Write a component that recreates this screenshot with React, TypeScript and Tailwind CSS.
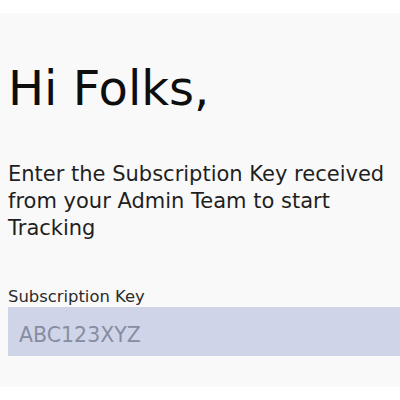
import React from 'react'

const App = () => {
  return (
    <div className="min-h-screen bg-white pt-[13px]" style={{fontFamily: '"DejaVu Sans", sans-serif'}}>
      <div className="h-[374px] bg-[#f9f9f9] pl-2 pt-[51px]">
        <h1 className="text-[48px] leading-[48px] text-[#0e0e0e]">Hi Folks,</h1>
        <p className="mt-[49px] pr-2 text-[21px] leading-[27px] text-[#1f1f1f]">
          Enter the Subscription Key received from your Admin Team to start Tracking
        </p>
        <label className="mt-[45px] block text-[16.4px] leading-[20px] text-[#2b2b2b]">Subscription Key</label>
        <input
          type="text"
          placeholder="ABC123XYZ"
          className="block h-[49px] w-full bg-[#cfd4e9] pl-[11px] pt-[16px] pb-[10px] text-[20.5px] leading-[23px] text-[#333] outline-none placeholder:text-[#878da0]"
        />
      </div>
    </div>
  );
}

export default App
